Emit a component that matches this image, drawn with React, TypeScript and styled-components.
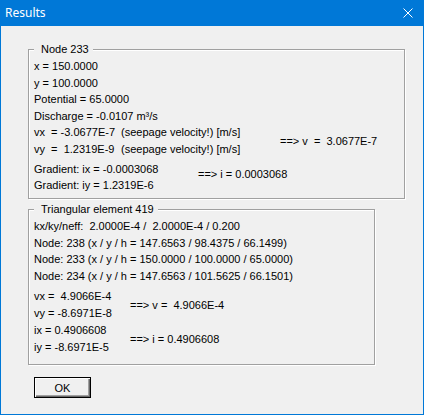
import React from "react";
import styled, { createGlobalStyle } from "styled-components";

const Global = createGlobalStyle`
  html, body { margin: 0; padding: 0; background: #f0f0f0; }
`;

const Window = styled.div`
  width: 424px;
  height: 415px;
  box-sizing: border-box;
  border: 1px solid #0078d7;
  border-top: none;
  display: flex;
  flex-direction: column;
  background: #f0f0f0;
  font-family: "Liberation Sans", Arial, sans-serif;
  font-size: 11px;
  color: #000;
`;

const TitleBar = styled.div`
  height: 26px;
  flex: none;
  background: #0078d7;
  display: flex;
  align-items: center;
  justify-content: space-between;
  padding: 0 10px 0 4px;
  color: #fff;
  font-family: "Noto Sans", "Liberation Sans", sans-serif;
  font-size: 12px;
`;

const Title = styled.span`
  line-height: 16px;
`;

const Client = styled.div`
  flex: 1;
  display: flex;
  flex-direction: column;
  align-items: flex-start;
  padding: 23px 0 0 27px;
`;

const Group = styled.div<{ $w: number; $h: number; $mt?: number }>`
  position: relative;
  box-sizing: border-box;
  width: ${(p) => p.$w}px;
  height: ${(p) => p.$h}px;
  margin-top: ${(p) => p.$mt ?? 0}px;
  border: 1px solid #a0a0a0;
  box-shadow: 1px 1px 0 #fff, inset 1px 1px 0 #fff;
  padding: 8px 0 0 5px;
  display: flex;
  flex-direction: column;
`;

const Legend = styled.span`
  position: absolute;
  top: -7px;
  left: 5px;
  padding: 0 4px 0 7px;
  background: #f0f0f0;
  line-height: 13px;
  white-space: pre;
`;

const Line = styled.div<{ $h?: number }>`
  height: ${(p) => p.$h ?? 16.6}px;
  line-height: ${(p) => p.$h ?? 16.6}px;
  white-space: pre;
  display: flex;
`;

const Cell = styled.span<{ $w?: number }>`
  display: inline-block;
  width: ${(p) => (p.$w ? `${p.$w}px` : "auto")};
  white-space: pre;
`;

const Pair = styled.div<{ $mt?: number }>`
  display: flex;
  align-items: center;
  margin-top: ${(p) => p.$mt ?? 0}px;
`;

const PairLeft = styled.div<{ $w: number }>`
  width: ${(p) => p.$w}px;
  display: flex;
  flex-direction: column;
`;

const Result = styled.span<{ $dy?: number }>`
  white-space: pre;
  position: relative;
  top: ${(p) => p.$dy ?? 0}px;
`;

const Button = styled.button`
  margin-top: 12px;
  margin-left: 6px;
  width: 57px;
  height: 21px;
  box-sizing: border-box;
  border: 1px solid #000;
  background: #f0f0f0;
  box-shadow: inset 1px 1px 0 #fff, inset -1px -1px 0 #696969, inset -2px -2px 0 #a0a0a0;
  font-family: "Liberation Sans", Arial, sans-serif;
  font-size: 11px;
  color: #000;
  padding: 0;
`;

const CloseIcon = () => (
  <svg width="10" height="10" viewBox="0 0 10 10">
    <path d="M0.5 0.5 L9.5 9.5 M9.5 0.5 L0.5 9.5" stroke="#fff" strokeWidth="1" fill="none" />
  </svg>
);

export default function App() {
  return (
    <>
      <Global />
      <Window>
        <TitleBar>
          <Title>Results</Title>
          <CloseIcon />
        </TitleBar>
        <Client>
          <Group $w={377} $h={150}>
            <Legend>Node 233</Legend>
            <Line>x = 150.0000</Line>
            <Line>y = 100.0000</Line>
            <Line>Potential = 65.0000</Line>
            <Line>Discharge = -0.0107 m³/s</Line>
            <Pair>
              <PairLeft $w={246}>
                <Line>
                  <Cell $w={87}>vx  = -3.0677E-7</Cell>
                  <Cell>(seepage velocity!) [m/s]</Cell>
                </Line>
                <Line>
                  <Cell $w={87}>vy  =  1.2319E-9</Cell>
                  <Cell>(seepage velocity!) [m/s]</Cell>
                </Line>
              </PairLeft>
              <Result>==&gt; v  =  3.0677E-7</Result>
            </Pair>
            <Pair $mt={3}>
              <PairLeft $w={164}>
                <Line>Gradient: ix = -0.0003068</Line>
                <Line>Gradient: iy = 1.2319E-6</Line>
              </PairLeft>
              <Result $dy={-3}>==&gt; i = 0.0003068</Result>
            </Pair>
          </Group>

          <Group $w={347} $h={156} $mt={10}>
            <Legend>Triangular element 419</Legend>
            <Line>kx/ky/neff:  2.0000E-4 /  2.0000E-4 / 0.200</Line>
            <Line>Node: 238 (x / y / h = 147.6563 / 98.4375 / 66.1499)</Line>
            <Line>Node: 233 (x / y / h = 150.0000 / 100.0000 / 65.0000)</Line>
            <Line>Node: 234 (x / y / h = 147.6563 / 101.5625 / 66.1501)</Line>
            <Pair $mt={4}>
              <PairLeft $w={96}>
                <Line $h={17}>vx =  4.9066E-4</Line>
                <Line $h={17}>vy = -8.6971E-8</Line>
              </PairLeft>
              <Result>==&gt; v =  4.9066E-4</Result>
            </Pair>
            <Pair>
              <PairLeft $w={96}>
                <Line>ix = 0.4906608</Line>
                <Line>iy = -8.6971E-5</Line>
              </PairLeft>
              <Result>==&gt; i = 0.4906608</Result>
            </Pair>
          </Group>

          <Button>OK</Button>
        </Client>
      </Window>
    </>
  );
}
